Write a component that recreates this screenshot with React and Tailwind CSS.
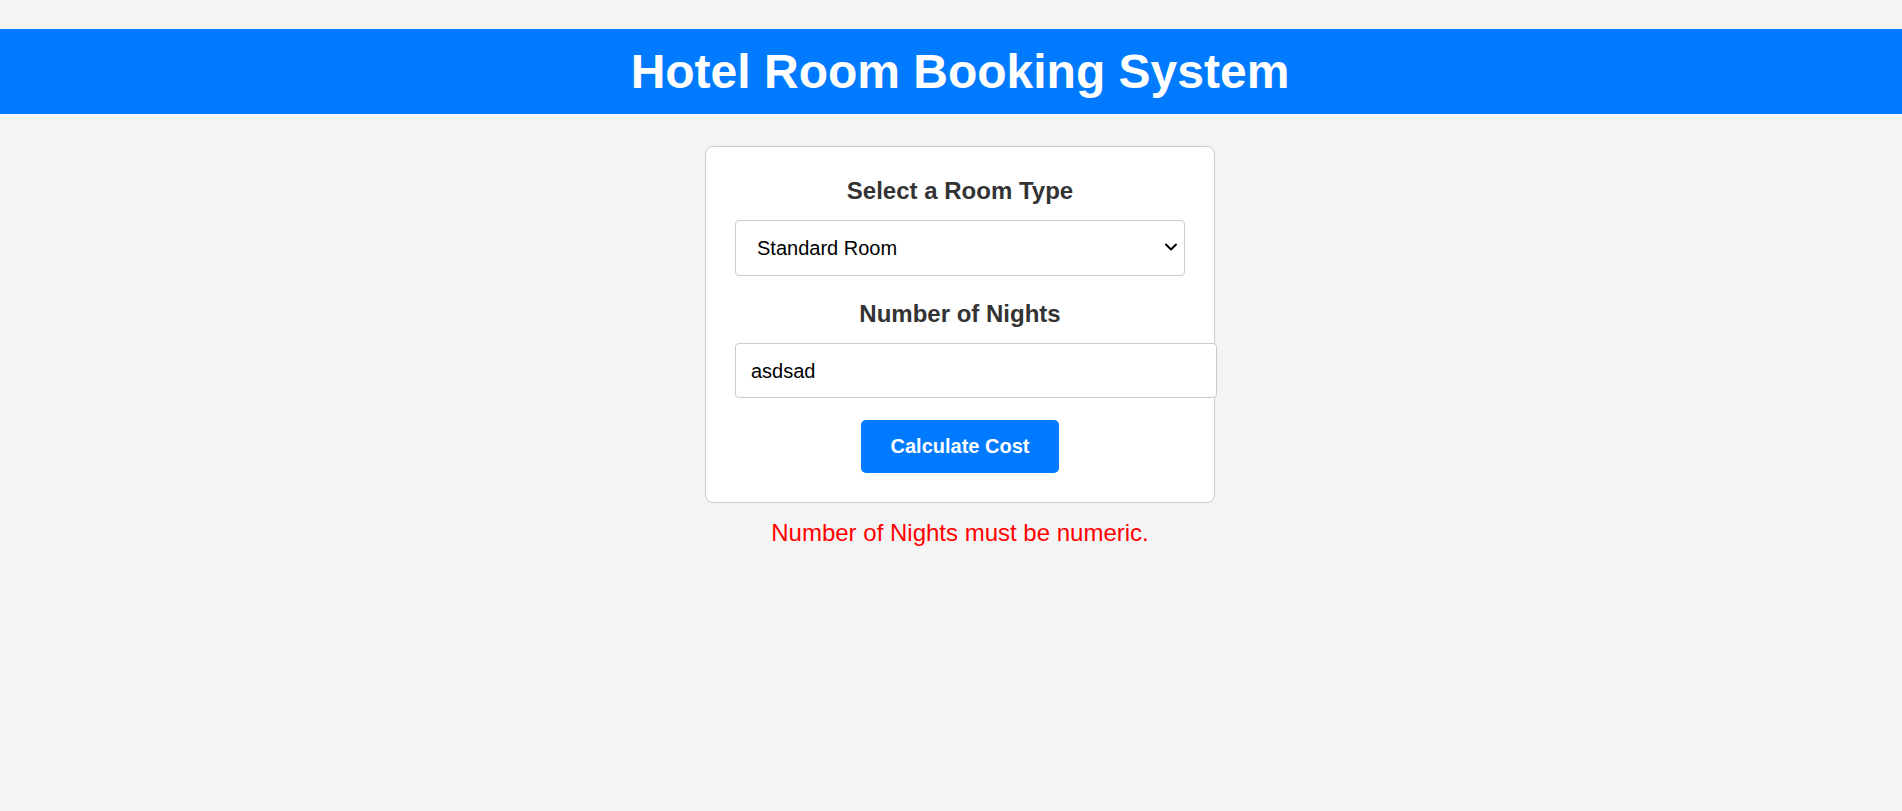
import React, { useState } from 'react';

const App = () => {
  const [room, setRoom] = useState('standard');
  const [nights, setNights] = useState('asdsad');

  return (
    <div className="min-h-[811px] overflow-hidden bg-[#f4f4f4] font-['Liberation_Sans',Arial,sans-serif]">
      <div className="w-[1920px] pt-[29px]">
        {/* Header */}
        <header className="bg-[#007bff] py-[15px] text-center">
          <h1 className="text-[48px] leading-[55px] font-bold text-white">Hotel Room Booking System</h1>
        </header>

        <div className="flex flex-col items-center pt-[32px]">
          {/* Booking card */}
          <div className="w-[510px] rounded-[8px] border border-[#cccccc] bg-white px-[29px] pt-[30px] pb-[29px] text-center">
            <h2 className="mb-[15px] text-[24px] leading-[28px] font-bold text-[#333333]">Select a Room Type</h2>
            <div className="relative">
              <select
                value={room}
                onChange={(e) => setRoom(e.target.value)}
                className="h-[56px] w-full appearance-none rounded-[4px] border border-[#cccccc] bg-white pl-[21px] text-[20px] text-black outline-none"
              >
                <option value="standard">Standard Room</option>
                <option value="deluxe">Deluxe Room</option>
                <option value="suite">Suite</option>
              </select>
              <svg
                className="pointer-events-none absolute top-[22px] right-[7px]"
                width="14"
                height="10"
                viewBox="0 0 14 10"
                fill="none"
              >
                <path d="M2 2.5 L7 7.5 L12 2.5" stroke="#000" strokeWidth="2" strokeLinecap="round" strokeLinejoin="round" />
              </svg>
            </div>

            <h2 className="mt-[24px] mb-[15px] text-[24px] leading-[28px] font-bold text-[#333333]">Number of Nights</h2>
            <input
              type="text"
              value={nights}
              onChange={(e) => setNights(e.target.value)}
              className="box-content block h-[23px] w-full rounded-[4px] border border-[#cccccc] bg-white px-[15px] py-[15px] text-left text-[20px] text-black outline-none"
            />

            <button className="mt-[22px] rounded-[5px] bg-[#007bff] px-[30px] py-[15px] text-[20px] leading-[23px] font-bold text-white">
              Calculate Cost
            </button>
          </div>

          <p className="mt-[16px] text-[24px] leading-[28px] text-[#ff0000]">Number of Nights must be numeric.</p>
        </div>
      </div>
    </div>
  );
};

export default App;
